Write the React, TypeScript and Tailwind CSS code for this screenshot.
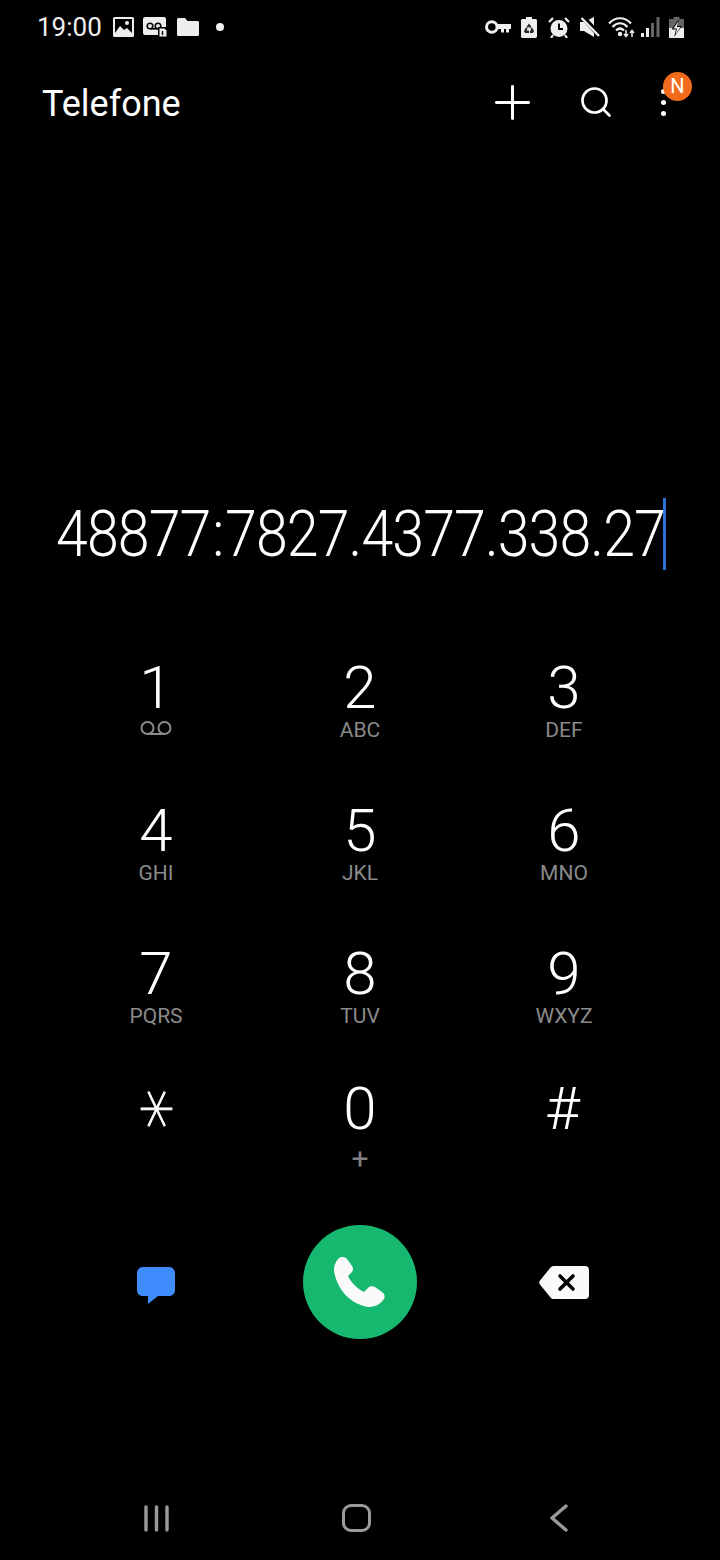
import { Plus, Search } from 'lucide-react';

const keys = [
  { digit: '1', sub: 'voicemail' },
  { digit: '2', sub: 'ABC' },
  { digit: '3', sub: 'DEF' },
  { digit: '4', sub: 'GHI' },
  { digit: '5', sub: 'JKL' },
  { digit: '6', sub: 'MNO' },
  { digit: '7', sub: 'PQRS' },
  { digit: '8', sub: 'TUV' },
  { digit: '9', sub: 'WXYZ' },
  { digit: '*', sub: '' },
  { digit: '0', sub: '+' },
  { digit: '#', sub: '' },
];

function VoicemailGlyph({ className, color }: { className?: string; color: string }) {
  return (
    <svg className={className} viewBox="0 0 32 14" fill="none" stroke={color} strokeWidth="2">
      <circle cx="7.5" cy="7" r="6" />
      <circle cx="24.5" cy="7" r="6" />
      <path d="M7.5 13h17" />
    </svg>
  );
}

function LeftStatusIcons() {
  return (
    <div className="ml-[11px] flex items-center">
      <svg width="21" height="20" viewBox="0 0 21 20">
        <rect width="21" height="20" rx="1.5" fill="#eee" />
        <rect x="2" y="2" width="17" height="16" fill="#000" />
        <path d="M2 16l5-7 4 4 3-2 5 5v2H2z" fill="#eee" />
        <circle cx="14" cy="6" r="2" fill="#eee" />
      </svg>
      <div className="relative ml-[9px] h-[20px] w-[25px]">
        <svg width="25" height="20" viewBox="0 0 25 20">
          <rect width="23" height="18" rx="2" fill="#eee" />
          <circle cx="7" cy="9" r="2.8" fill="none" stroke="#000" strokeWidth="1.6" />
          <circle cx="15" cy="9" r="2.8" fill="none" stroke="#000" strokeWidth="1.6" />
          <path d="M7 11.8h8" stroke="#000" strokeWidth="1.6" />
          <rect x="15" y="10" width="10" height="10" fill="#000" />
          <path d="M16.5 11.5h5l2 2v6h-7z" fill="#eee" />
          <path d="M19.5 14v4" stroke="#000" strokeWidth="1.4" />
        </svg>
      </div>
      <svg className="ml-[9px]" width="22" height="18" viewBox="0 0 22 18">
        <path d="M0 1.5C0 .7.7 0 1.5 0h6.5l2.5 3h10C21.3 3 22 3.7 22 4.5V16.5c0 .8-.7 1.500-1.500 1.500h-19C.7 18 0 17.300 0 16.500z" fill="#eee" />
      </svg>
      <div className="ml-[17px] h-[8px] w-[8px] rounded-full bg-[#eee]" />
    </div>
  );
}

function RightStatusIcons() {
  return (
    <div className="ml-auto flex items-center">
      <svg width="26" height="14" viewBox="0 0 26 14" fill="none">
        <circle cx="6.800" cy="7" r="5.300" stroke="#eee" strokeWidth="3" />
        <path d="M11 4h15v5h-2v3.500h-3V9h-2v3.500h-3V9h-5z" fill="#eee" />
      </svg>
      <svg className="ml-[10px]" width="16" height="21" viewBox="0 0 16 21">
        <path d="M5 0h6v2h3.500c.8 0 1.500.7 1.500 1.500v16c0 .8-.7 1.500-1.500 1.500h-13C.7 21 0 20.300 0 19.500v-16C0 2.700.7 2 1.500 2H5z" fill="#eee" />
        <path d="M8 6.500l2.500 3.500-1.500 1-1-1.500-1 1.500-1.500-1zM3 14l2-3.500 1.500 1-1 2H8V16H4zM13 14l-2-3.500-1.500 1 1 2H9V16h3z" fill="#222" />
      </svg>
      <svg className="ml-[11px]" width="22" height="21" viewBox="0 0 22 21">
        <circle cx="11" cy="11.500" r="8.500" fill="#eee" />
        <path d="M11 6.500v5.500h4" fill="none" stroke="#000" strokeWidth="2" />
        <path d="M1 5l4-4M21 5l-4-4M5 18l-2 3M17 18l2 3" stroke="#eee" strokeWidth="2.200" />
      </svg>
      <svg className="ml-[10px]" width="20" height="20" viewBox="0 0 20 20">
        <path d="M0 5h4l10-5v20L4 14H0z" fill="#eee" />
        <path d="M2 -1l18 20" stroke="#000" strokeWidth="5" />
        <path d="M1.500 1l17.500 18" stroke="#eee" strokeWidth="2.400" />
      </svg>
      <svg className="ml-[8px]" width="27" height="21" viewBox="0 0 27 21" fill="none">
        <path d="M1 6.500C7-.500 17-.500 23 6.500" stroke="#eee" strokeWidth="2.200" />
        <path d="M4.500 10c4.500-5 10.500-5 15 0" stroke="#eee" strokeWidth="2.200" />
        <path d="M8 13.500c2.500-2.500 5.500-2.500 8 0" stroke="#eee" strokeWidth="2.200" />
        <circle cx="12" cy="17" r="2.200" fill="#eee" />
        <path d="M18 13v6M16 17l2 2.500 2-2.500M24 20v-6M22 16l2-2.500 2 2.500" stroke="#eee" strokeWidth="1.500" />
      </svg>
      <svg className="ml-[6px]" width="19" height="20" viewBox="0 0 19 20">
        <rect x="0" y="16" width="3" height="4" fill="#eee" />
        <rect x="5" y="11" width="3" height="9" fill="#eee" />
        <rect x="10" y="6" width="3" height="14" fill="#666" />
        <rect x="15.500" y="0" width="3" height="20" fill="#666" />
      </svg>
      <svg className="ml-[9px] mr-[36px]" width="15" height="21" viewBox="0 0 15 21">
        <path d="M4.500 0h6v2H15v19H0V2h4.500z" fill="#666" />
        <path d="M0 11h15v10H0z" fill="#eee" />
        <path d="M10 2L2.500 12.500H7L5 20l8-11H8.500z" fill="#000" />
        <path d="M9.500 4L4.500 11.500H8L6.500 17.500 11.500 10H7.800z" fill="#eee" />
      </svg>
    </div>
  );
}

function DialKey({ digit, sub }: { digit: string; sub: string }) {
  return (
    <div className="flex flex-col items-center">
      {digit === '*' ? (
        <span className="h-[60px] -translate-x-[11px] rotate-90 scale-x-[1.08] scale-y-[0.88] font-['DejaVu_Sans',sans-serif] text-[76px] leading-[60px] font-extralight text-white [-webkit-text-stroke:0.8px_white]">
          *
        </span>
      ) : (
        <span
          className={
            digit === '#'
              ? "-ml-[3px] h-[60px] font-['Roboto',sans-serif] text-[60px] leading-[60px] font-light text-white"
              : "h-[60px] font-['Roboto',sans-serif] text-[60px] leading-[60px] font-light text-white"
          }
        >
          {digit}
        </span>
      )}
      {sub === 'voicemail' ? (
        <VoicemailGlyph className="mt-[3px] h-[14px] w-[32px]" color="#8a8a8a" />
      ) : sub === '+' ? (
        <span className="mt-[5px] font-['Roboto',sans-serif] text-[30px] leading-[30px] font-normal text-[#808080]">+</span>
      ) : (
        <span className="font-['Roboto',sans-serif] text-[21px] leading-[24px] text-[#8a8a8a]">{sub}</span>
      )}
    </div>
  );
}

export default function App() {
  return (
    <div className="flex h-[1560px] w-[720px] flex-col overflow-hidden bg-black font-['Roboto',sans-serif] text-white">
      {/* status bar */}
      <div className="flex h-[54px] items-center pl-[37px]">
        <span className="text-[26px] leading-none text-[#eee]">19:00</span>
        <LeftStatusIcons />
        <RightStatusIcons />
      </div>

      {/* app bar */}
      <div className="flex h-[98px] items-center pl-[42px]">
        <span className="pt-[2px] text-[36px] leading-none">Telefone</span>
        <div className="ml-auto flex items-center pb-[2px]">
          <Plus size={55} strokeWidth={1.3} className="text-white" />
          <Search size={36} strokeWidth={1.8} className="ml-[38px] text-white" />
          <div className="relative ml-[47px] mr-[54px] flex flex-col gap-[6px]">
            <div className="h-[5px] w-[5px] rounded-full bg-white" />
            <div className="h-[5px] w-[5px] rounded-full bg-white" />
            <div className="h-[5px] w-[5px] rounded-full bg-white" />
            <div className="absolute left-[2px] top-[-17px] flex h-[29px] w-[29px] items-center justify-center rounded-full bg-[#f26a1b] text-[20px] leading-none">
              N
            </div>
          </div>
        </div>
      </div>

      {/* number */}
      <div className="mt-[346px] flex h-[72px] items-center justify-center pl-[2px]">
        <div className="w-[607px] pt-[2px]">
          <div className="w-[690px] origin-left scale-x-[0.895] text-[64px] leading-none font-light tracking-[-1px] whitespace-nowrap">
            48877<span className="mx-[2px]">:</span>7827.4377.338.27
          </div>
        </div>
        <div className="h-[72px] w-[3px] bg-[#2a72d6]" />
      </div>

      {/* keypad */}
      <div className="mt-[88px] grid grid-cols-3 grid-rows-[143px_143px_135px_146px] px-[54px]">
        {keys.map((k) => (
          <DialKey key={k.digit} digit={k.digit} sub={k.sub} />
        ))}
      </div>

      {/* actions */}
      <div className="grid grid-cols-3 items-center px-[54px]">
        <div className="flex justify-center pt-[7px]">
          <svg width="40" height="38" viewBox="0 0 40 38">
            <path d="M7 0h26c3.500 0 6 2.500 6 6v17c0 3.500-2.500 6-6 6H22l-10 8v-8H7c-3.500 0-6-2.500-6-6V6c0-3.500 2.500-6 6-6z" fill="#3f8cff" />
          </svg>
        </div>
        <div className="flex justify-center">
          <div className="flex h-[114px] w-[114px] items-center justify-center rounded-full bg-[#16b76f]">
            <svg className="mr-[1px]" width="51" height="50" viewBox="0 0 51 50">
              <path d="M5 1C8-1 11 0 13 2l5 7c2 3 1 5-1 7l-3 3c3 7 10 13 16 16l4-4c2-2 4-2 7-1l7 5c3 2 3 5 2 7-4 6-10 8-16 8C16 47 3 32 0 14 0 8 2 4 5 1z" fill="#fafafa" />
            </svg>
          </div>
        </div>
        <div className="flex justify-center">
          <svg width="50" height="33" viewBox="0 0 50 33">
            <path d="M15 0h31c2.500 0 4 1.500 4 4v25c0 2.500-1.500 4-4 4H15c-1.500 0-2.500-.5-3.500-1.500L1 18.500c-1-1.200-1-2.800 0-4L11.500 1.500C12.500.5 13.500 0 15 0z" fill="#fafafa" />
            <path d="M21 10l13 13M34 10L21 23" stroke="#000" strokeWidth="3.600" strokeLinecap="round" />
          </svg>
        </div>
      </div>

      {/* nav bar */}
      <div className="mt-auto grid h-[84px] grid-cols-3 items-center px-[54px]">
        <div className="flex justify-center">
          <svg width="25" height="27" viewBox="0 0 25 27" stroke="#9a9a9a" strokeWidth="3.400" strokeLinecap="round">
            <path d="M2 2v23M12.500 2v23M23 2v23" />
          </svg>
        </div>
        <div className="flex justify-center pr-[8px]">
          <div className="h-[28px] w-[29px] rounded-[9px] border-[3.500px] border-[#9a9a9a]" />
        </div>
        <div className="flex justify-center">
          <svg className="mr-[10px]" width="18" height="28" viewBox="0 0 18 28" fill="none" stroke="#9a9a9a" strokeWidth="3.400" strokeLinecap="round" strokeLinejoin="round">
            <path d="M16 2L2 14l14 12" />
          </svg>
        </div>
      </div>
    </div>
  );
}
